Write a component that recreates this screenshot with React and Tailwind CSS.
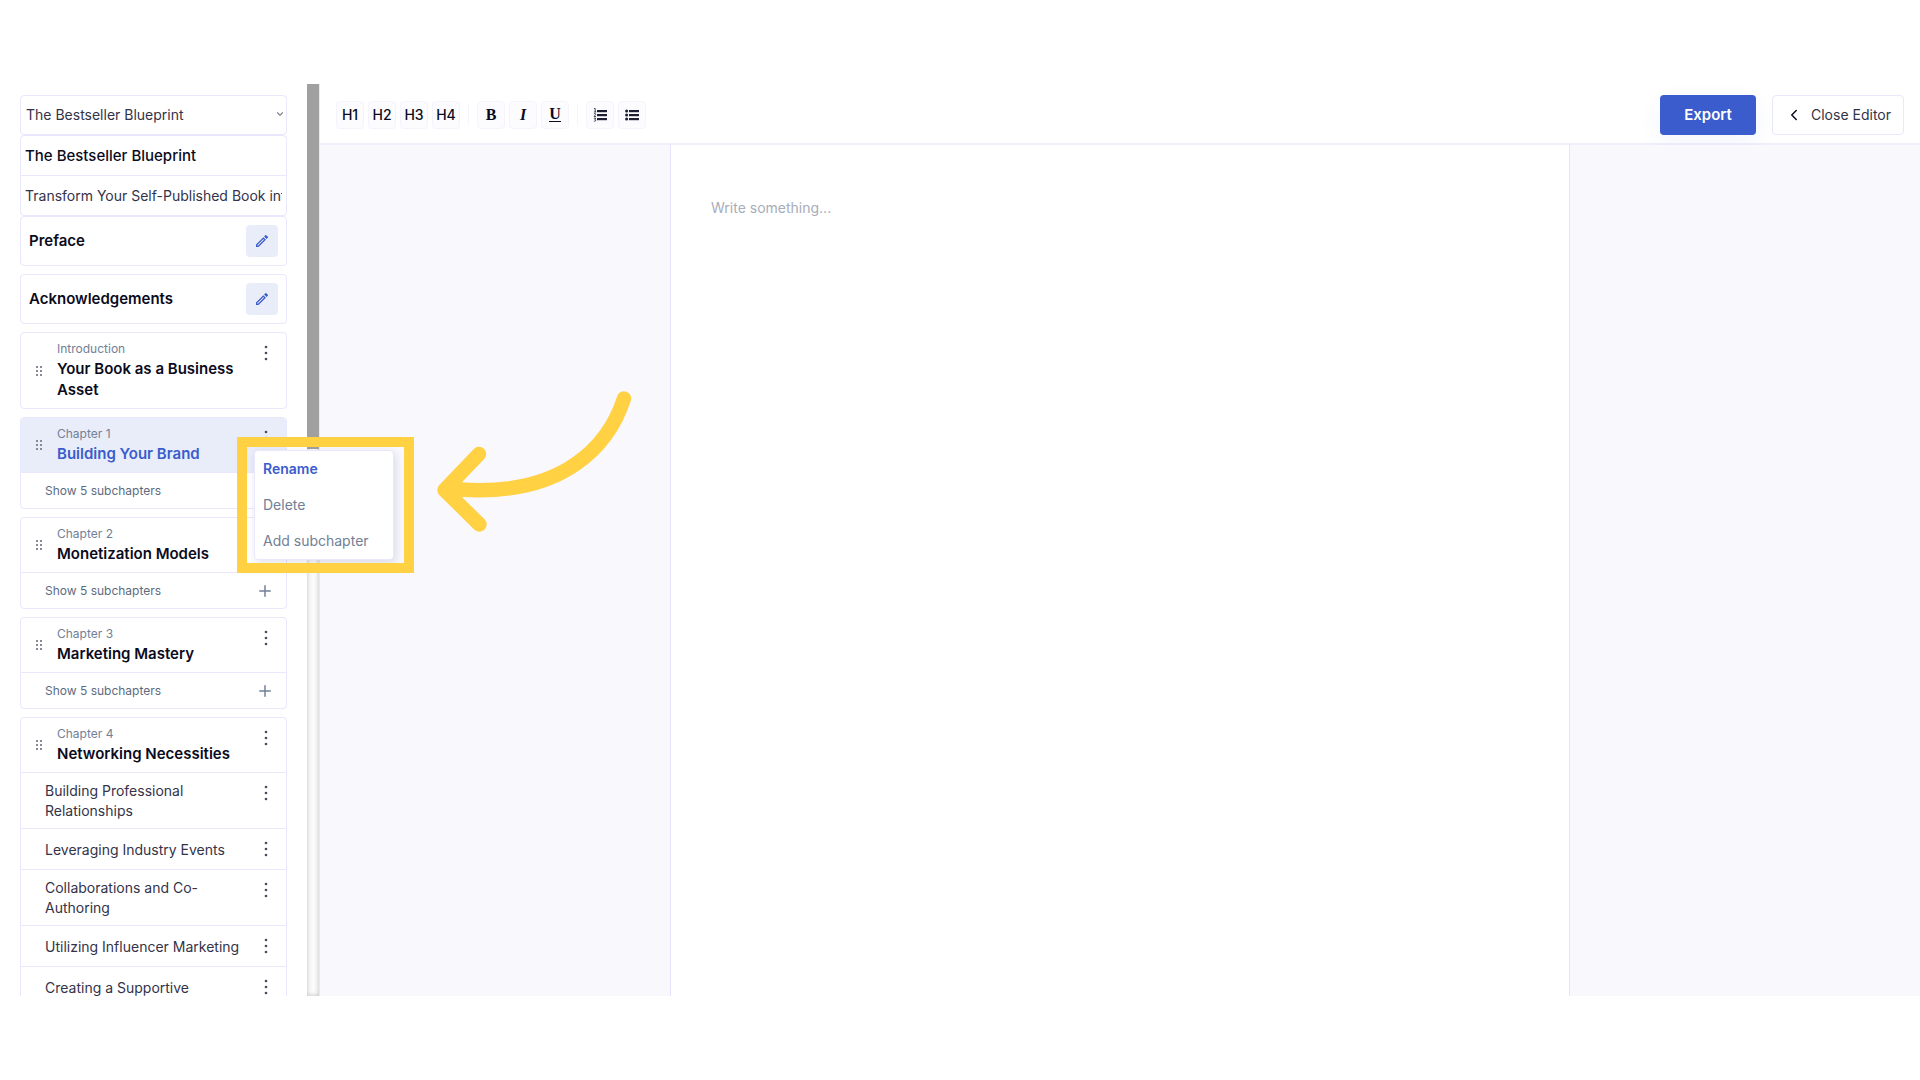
import React from 'react';
import { ChevronDown, ChevronLeft, Plus } from 'lucide-react';
import { MdOutlineModeEdit } from 'react-icons/md';

const CHAPTERS = [
  { label: 'Introduction', title: 'Your Book as a Business Asset' },
  { label: 'Chapter 1', title: 'Building Your Brand', active: true, count: 5 },
  { label: 'Chapter 2', title: 'Monetization Models', count: 5 },
  { label: 'Chapter 3', title: 'Marketing Mastery', count: 5 },
  {
    label: 'Chapter 4',
    title: 'Networking Necessities',
    subs: [
      'Building Professional Relationships',
      'Leveraging Industry Events',
      'Collaborations and Co-Authoring',
      'Utilizing Influencer Marketing',
      'Creating a Supportive',
    ],
  },
];

const HEADINGS = ['H1', 'H2', 'H3', 'H4'];

const MARKS = [
  ['Bold', 'B', 'block font-bold'],
  ['Italic', 'I', 'block font-bold italic'],
  ['Underline', 'U', 'block border-b border-[#0b0b20] font-bold'],
];

function Dots({ label }) {
  return (
    <button type="button" aria-label={label} className="flex h-10 w-5 shrink-0 items-center justify-center">
      <svg viewBox="0 0 4 18" className="h-[18px] w-1 fill-[#4a4a5e]">
        <circle cx="2" cy="3" r="1.3" />
        <circle cx="2" cy="9" r="1.3" />
        <circle cx="2" cy="15" r="1.3" />
      </svg>
    </button>
  );
}

function Grip() {
  return (
    <svg viewBox="0 0 8 12" className="h-3 w-2 shrink-0 fill-[#8a8a96]" aria-hidden="true">
      {[2, 6, 10].map((y) => (
        <React.Fragment key={y}>
          <rect x="1" y={y - 1} width="2" height="2" />
          <rect x="5" y={y - 1} width="2" height="2" />
        </React.Fragment>
      ))}
    </svg>
  );
}

function ListIcon({ ordered }) {
  return (
    <svg viewBox="0 0 14 14" className="h-[14px] w-[14px]" fill="#1d1d33" aria-hidden="true">
      {[2, 6, 10].map((y) => (
        <rect key={y} x="4" y={y} width="10" height="2.2" />
      ))}
      {ordered ? (
        <path
          d="M1 .8L2.200.3V4M.9 4H3.200M.9 5.800Q2.800 4.900 2.700 6.300L1 8.600H3M.9 10.200H2.800L1.800 11.400Q3 11.500 2.700 12.700Q2 13.600.8 13"
          fill="none"
          stroke="#1d1d33"
          strokeWidth="0.8"
        />
      ) : (
        [3.1, 7.1, 11.1].map((y) => <circle key={y} cx="1.6" cy={y} r="1.5" />)
      )}
    </svg>
  );
}

function Section({ title }) {
  return (
    <div className="mb-2 flex h-[50px] items-center justify-between rounded border border-[#e9e7fb] px-2">
      <span className="text-[15px] font-semibold leading-5 text-[#0b0b20]">{title}</span>
      <button
        type="button"
        aria-label={`Edit ${title}`}
        className="flex h-8 w-8 items-center justify-center rounded bg-[#e9edf9] text-[#3a5ccc]"
      >
        <MdOutlineModeEdit className="h-4 w-4 stroke-[#3a5ccc]" />
      </button>
    </div>
  );
}

function Chapter({ chapter }) {
  const { label, title, active, count, subs } = chapter;
  return (
    <li className="mb-2 rounded border border-[#e9e7fb]">
      <div className={active ? 'flex rounded-t bg-[#e9edf9] pr-[10px]' : 'flex pr-[10px]'}>
        <div className="flex w-9 shrink-0 items-center pl-[14px]">
          <Grip />
        </div>
        <div className="min-w-0 flex-1 pb-2 pt-[7px]">
          <p className="text-xs leading-[18px] text-[#718096]">{label}</p>
          <p
            className={
              active
                ? 'text-[15px] font-semibold leading-[21px] text-[#3a5ccc]'
                : 'text-[15px] font-semibold leading-[21px] text-[#0b0b20]'
            }
          >
            {title}
          </p>
        </div>
        <Dots label={`${label} menu`} />
      </div>
      {count && (
        <div className="flex h-9 items-center justify-between border-t border-[#e9e7fb] pl-6 pr-3">
          <button type="button" className="text-xs text-[#5b6b80]">
            Show {count} subchapters
          </button>
          <button type="button" aria-label={`Add subchapter to ${title}`}>
            <Plus className="h-[18px] w-[18px] text-[#718096]" strokeWidth={2} />
          </button>
        </div>
      )}
      {subs && (
        <ul>
          {subs.map((sub) => (
            <li key={sub} className="flex justify-between border-t border-[#e9e7fb] pl-6 pr-[10px]">
              <a href="#sub" className="my-auto max-w-[200px] pb-[7px] pt-2 text-sm leading-5 text-[#33334a]">
                {sub}
              </a>
              <Dots label={`${sub} menu`} />
            </li>
          ))}
        </ul>
      )}
    </li>
  );
}

function Sidebar() {
  return (
    <aside className="flex w-80 shrink-0 border-r border-[#e9e7fb]">
      <div className="min-w-0 flex-1 overflow-hidden px-5 pt-[11px]">
        <div className="relative">
          <select
            aria-label="Book"
            className="block h-10 w-full appearance-none rounded border border-[#e9e7fb] bg-white px-[5px] text-sm text-[#33334a]"
          >
            <option>The Bestseller Blueprint</option>
          </select>
          <ChevronDown
            className="pointer-events-none absolute right-[2px] top-[14px] h-[10px] w-[10px] text-[#8a8a96]"
            strokeWidth={3}
          />
        </div>
        <div className="overflow-hidden rounded border border-[#e9e7fb]">
          <input
            aria-label="Title"
            defaultValue="The Bestseller Blueprint"
            className="block h-10 w-full border-b border-[#e9e7fb] px-1 text-[15px] font-medium text-[#0b0b20]"
          />
          <input
            aria-label="Subtitle"
            defaultValue="Transform Your Self-Published Book into a Business Asset"
            className="block h-[39px] w-full px-1 text-sm text-[#33334a]"
          />
        </div>
        <Section title="Preface" />
        <Section title="Acknowledgements" />
        <ul>
          {CHAPTERS.map((c) => (
            <Chapter key={c.label} chapter={c} />
          ))}
        </ul>
      </div>
      <div className="w-3 shrink-0 bg-[#fbfbfb] shadow-[inset_0_0_5px_#bdbdbd]">
        <div className="h-2/5 bg-[#a0a0a0]" />
      </div>
    </aside>
  );
}

function ToolButton({ label, children }) {
  return (
    <button
      type="button"
      aria-label={label}
      className="flex h-7 w-7 items-center justify-center rounded border border-[#f5f4fd] bg-[#fcfcff] text-sm font-medium text-[#0b0b20]"
    >
      {children}
    </button>
  );
}

function Toolbar() {
  return (
    <header className="flex h-[61px] shrink-0 items-center justify-between border-b-2 border-[#f0effb] px-4 pt-[2px]">
      <div className="flex items-center gap-1">
        {HEADINGS.map((h) => (
          <ToolButton key={h} label={h}>
            {h}
          </ToolButton>
        ))}
        <span className="mx-1 h-5 w-px bg-[#f5f4fd]" />
        {MARKS.map(([label, letter, style]) => (
          <ToolButton key={label} label={label}>
            <span className="font-['Liberation_Serif',serif] text-base leading-[14px]">
              <span className={style}>{letter}</span>
            </span>
          </ToolButton>
        ))}
        <span className="mx-1 h-5 w-px bg-[#f5f4fd]" />
        <ToolButton label="Numbered list">
          <ListIcon ordered />
        </ToolButton>
        <ToolButton label="Bulleted list">
          <ListIcon />
        </ToolButton>
      </div>
      <div className="flex gap-4">
        <button
          type="button"
          className="h-10 w-24 rounded bg-[#3a5ccc] text-[15px] font-semibold leading-5 text-white shadow-[0_8px_24px_rgba(58,92,204,0.06)]"
        >
          Export
        </button>
        <button
          type="button"
          className="flex h-10 w-[132px] items-center justify-between rounded border border-[#e9e7fb] px-3 text-sm text-[#33334a]"
        >
          <ChevronLeft className="h-[18px] w-[18px] text-[#0b0b20]" strokeWidth={2} />
          Close Editor
        </button>
      </div>
    </header>
  );
}

function ChapterMenu() {
  return (
    <div
      role="menu"
      className="absolute left-[254px] top-[450px] flex w-[140px] flex-col rounded border border-[#e9e7fb] bg-white text-sm text-[#718096] shadow-[2px_3px_8px_rgba(60,60,120,0.15)]"
    >
      <button type="button" role="menuitem" className="h-9 px-2 text-left font-semibold text-[#3a5ccc]">
        Rename
      </button>
      <button type="button" role="menuitem" className="h-9 px-2 text-left">
        Delete
      </button>
      <button type="button" role="menuitem" className="h-9 px-2 text-left">
        Add subchapter
      </button>
    </div>
  );
}

// highlight frame and arrow pointing at the open menu
function Callout() {
  return (
    <>
      <div className="pointer-events-none absolute left-[237px] top-[437px] h-[136px] w-[177px] border-[10px] border-[#ffd143]" />
      <svg
        viewBox="0 0 200 145"
        className="pointer-events-none absolute left-[436px] top-[390px] h-[145px] w-[200px]"
        fill="none"
        stroke="#ffd143"
        strokeWidth="14.4"
        strokeLinecap="round"
        strokeLinejoin="round"
        aria-hidden="true"
      >
        <path d="M188 8.500C173 55 128 107 24 99.500L14 100" />
        <path d="M43 64L8.500 100L43.500 134.500" />
      </svg>
    </>
  );
}

export default function App() {
  return (
    <div className="relative flex h-screen bg-white py-[84px] font-[Inter,sans-serif]">
      <Sidebar />
      <main className="flex min-w-0 flex-1 flex-col">
        <Toolbar />
        <div className="flex flex-1 justify-center bg-[#f8f8fd]">
          <div className="flex w-[900px] border-x border-[#e6e4fa] bg-white">
            <textarea
              aria-label="Content"
              placeholder="Write something..."
              className="flex-1 resize-none px-10 pt-[53px] text-sm leading-5 outline-none placeholder:text-[#a8adb8]"
            />
          </div>
        </div>
      </main>
      <ChapterMenu />
      <Callout />
    </div>
  );
}
